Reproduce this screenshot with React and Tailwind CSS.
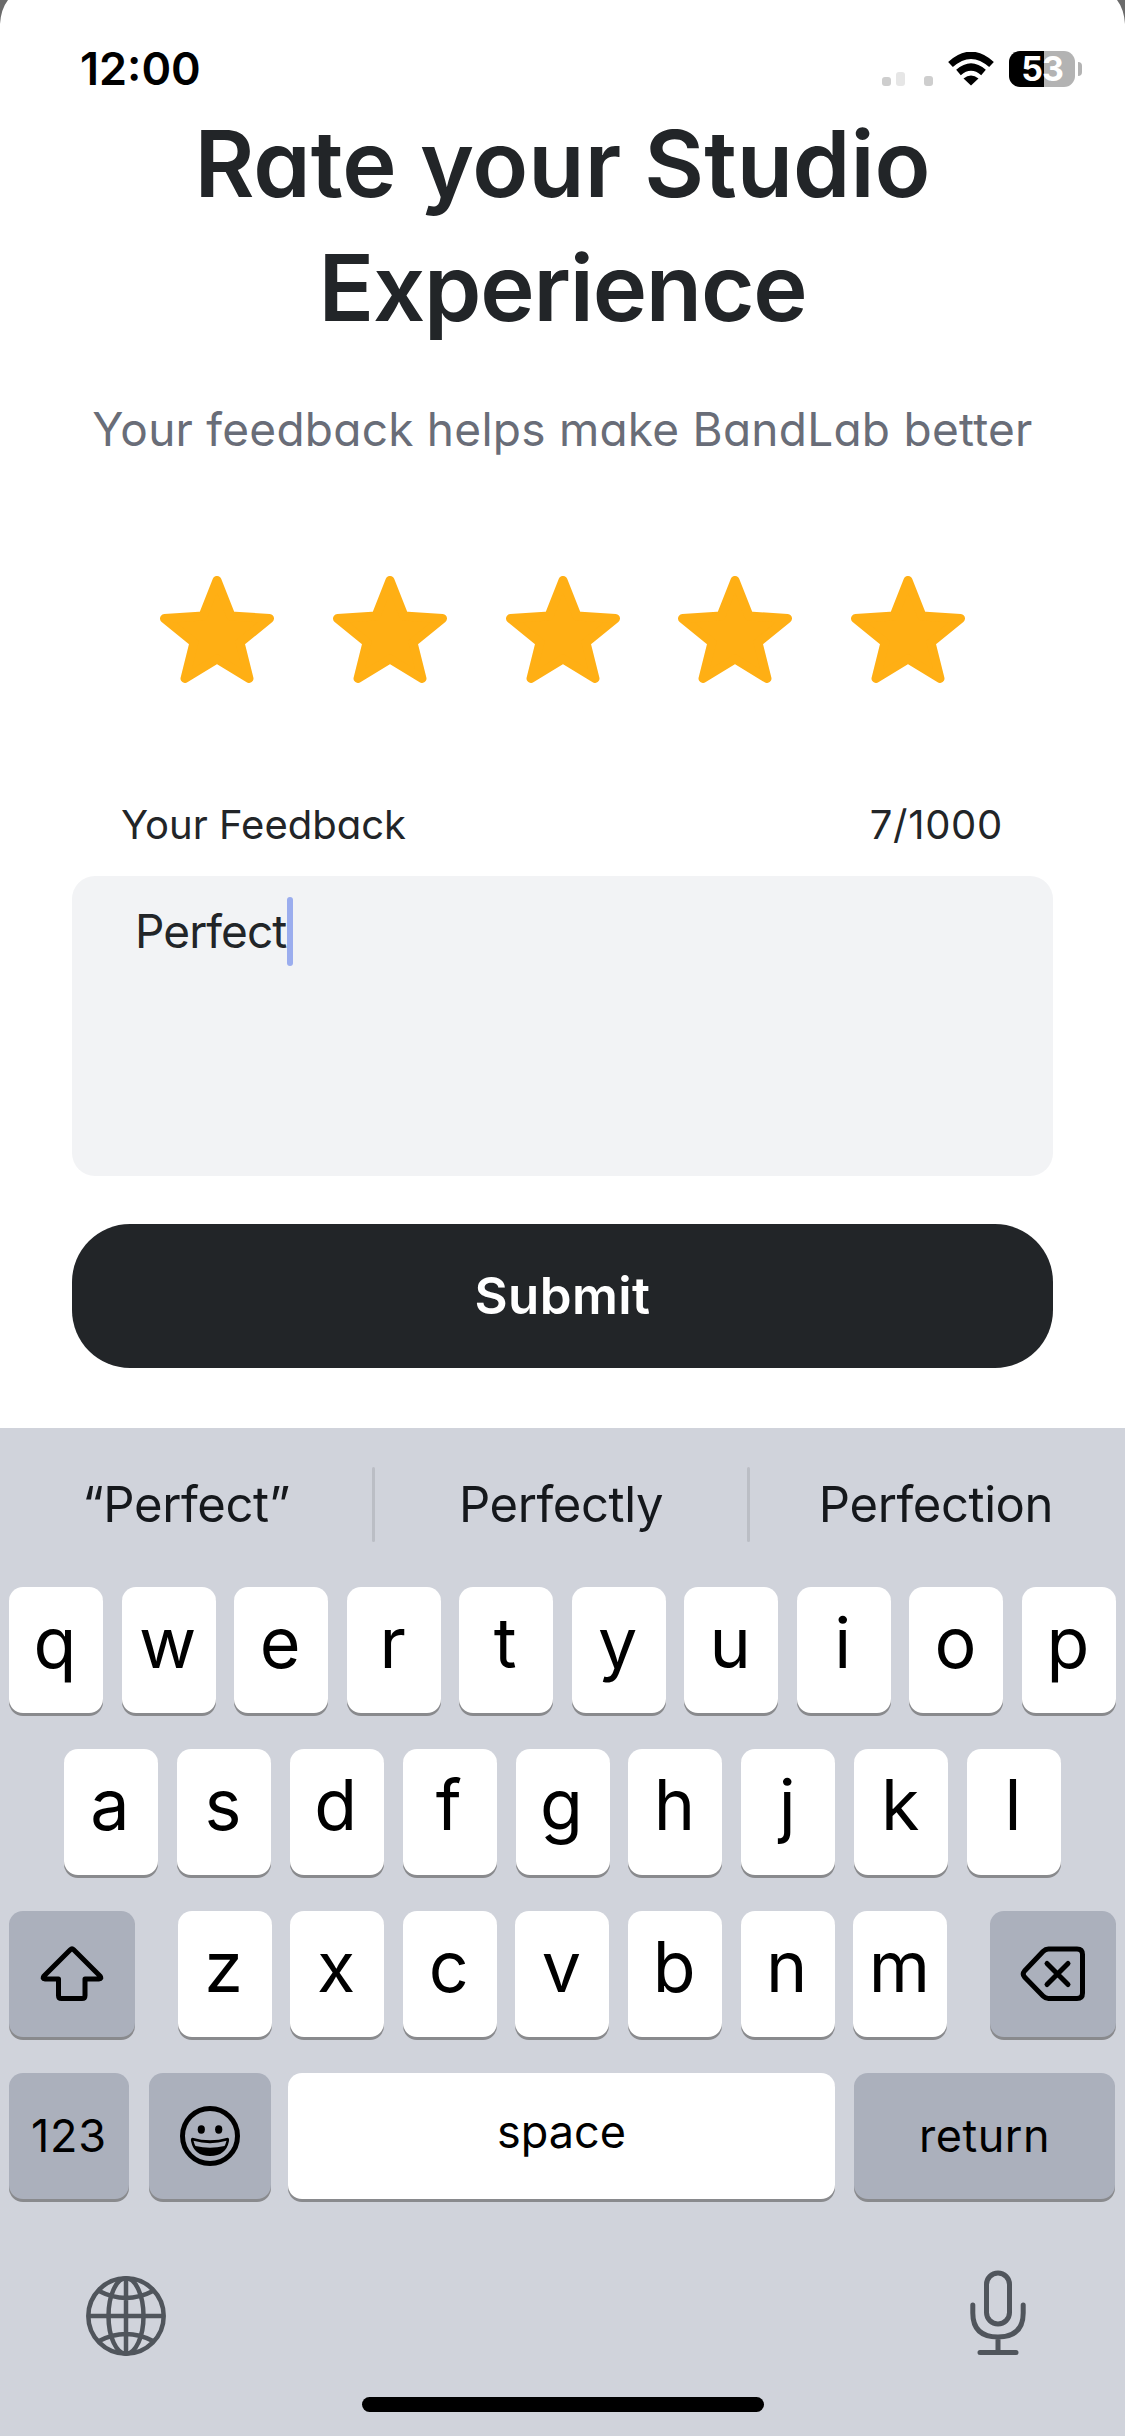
import React from "react";

const suggestions = ["“Perfect”", "Perfectly", "Perfection"];
const topRow = ["q", "w", "e", "r", "t", "y", "u", "i", "o", "p"];
const middleRow = ["a", "s", "d", "f", "g", "h", "j", "k", "l"];
const bottomRow = ["z", "x", "c", "v", "b", "n", "m"];

const StarIcon = () => (
  <svg viewBox="0 0 114 107" className="h-[107px] w-[114px]" fill="#ffaf14" stroke="#ffaf14" strokeWidth="9" strokeLinejoin="round">
    <path d="M57 4.500L71 40L109.500 42.500L80 66.500L89 102.500L57 83L25 102.500L34 66.500L4.500 42.500L43 40Z" />
  </svg>
);

const ShiftIcon = () => (
  <svg viewBox="0 0 64 56" className="h-14 w-16" fill="none" stroke="#000" strokeWidth="5" strokeLinejoin="round">
    <path d="M30.300 3.700Q32 2 33.700 3.700L60 30Q62 33 59 33H45V49.500Q45 52.500 42 52.500H21.500Q18.500 52.500 18.500 49.500V33H5Q2 33 4 30Z" />
  </svg>
);

const DeleteIcon = () => (
  <svg viewBox="0 0 66 56" className="h-14 w-[66px]" fill="none" stroke="#000" strokeWidth="5" strokeLinecap="round" strokeLinejoin="round">
    <path d="M28.500 3H57Q62.500 3 62.500 8.500V47Q62.500 52.500 57 52.500H28.500Q25.500 52.500 23 50L4.500 31Q2 28 4.500 25L23 5.500Q25.500 3 28.500 3Z" />
    <path d="M27 17.500L48 38.500M48 17.500L27 38.500" />
  </svg>
);

const SmileIcon = () => (
  <svg viewBox="0 0 60 60" className="h-[60px] w-[60px]">
    <circle cx="30" cy="30" r="27.500" fill="none" stroke="#000" strokeWidth="5" />
    <ellipse cx="21.300" cy="23.500" rx="3.600" ry="4.200" />
    <ellipse cx="38.700" cy="23.500" rx="3.600" ry="4.200" />
    <path d="M12.500 31.700Q30 37 47.500 31.700Q49.500 32 49 35Q46 50 30 50Q14 50 11 35Q10.500 32 12.500 31.700Z" />
    <path d="M13.500 34.800Q30 39.500 46.500 34.800Q45.800 38 44.500 40Q30 43.500 15.500 40Q14.200 38 13.500 34.800Z" fill="#abb0bc" />
  </svg>
);

const GlobeIcon = () => (
  <svg viewBox="0 0 80 80" className="h-20 w-20" fill="none" stroke="#50555c" strokeWidth="4.500">
    <circle cx="40" cy="40" r="37.700" />
    <ellipse cx="40" cy="40" rx="17.500" ry="37.700" />
    <path d="M40 2V78M2 40H78M13 15Q40 29 67 15M13 65Q40 51 67 65" />
  </svg>
);

const MicIcon = () => (
  <svg viewBox="0 0 56 86" className="h-[86px] w-14" fill="none" stroke="#50555c" strokeWidth="5" strokeLinecap="round">
    <rect x="16.500" y="3" width="23" height="51" rx="11.500" />
    <path d="M2.800 35V43Q2.800 67 28 67Q53.200 67 53.200 43V35M28 67V82M10 82.500H46" />
  </svg>
);

const StatusBar = () => (
  <div className="flex h-[120px] items-start justify-between pt-[51px] pr-[43px] pl-[80px]">
    <span className="text-[45px] leading-9 font-semibold">12:00</span>
    <div className="flex items-center">
      <div className="mr-[15px] flex h-9 items-end pb-px">
        <span className="h-[9px] w-[9px] rounded-[3px] bg-[#cecece]" />
        <span className="ml-[5px] h-3.5 w-[9px] rounded-[3px] bg-[#e6e6e6]" />
        <span className="ml-[19px] h-2.5 w-[9px] rounded-[3px] bg-[#cecece]" />
      </div>
      <svg viewBox="0 0 46 34" className="mr-[15px] h-[34px] w-[46px]" fill="none" stroke="#000" strokeWidth="7">
        <path d="M2.500 12.500Q23 -6 43.500 12.500M10.500 20.500Q23 9.500 35.500 20.500" />
        <path d="M15.500 26.500Q23 20.500 30.500 26.500L23 33.500Z" fill="#000" stroke="none" />
      </svg>
      <div className="flex h-9 w-[66px] items-center justify-center rounded-[11px] bg-[linear-gradient(to_right,#000_53%,#b3b3b3_53%)]">
        <span className="text-[34px] leading-9 font-bold tracking-[-1px] text-white">53</span>
      </div>
      <span className="ml-[3px] h-3.5 w-1 rounded-r-full bg-[#b3b3b3]" />
    </div>
  </div>
);

const LetterKey = ({ label }) => (
  <button className="h-[126px] w-[94px] rounded-[14px] bg-white pr-0.5 pb-[14px] text-[70px] leading-[112px] font-normal shadow-[0_3px_0_#898a8d]">
    {label}
  </button>
);

const Keyboard = () => (
  <div className="h-[1008px] bg-[#d0d3db]">
    <div className="flex h-[159px] items-start pt-[39px] pr-[3px]">
      {suggestions.map((word, i) => (
        <React.Fragment key={word}>
          {i > 0 && <span className="h-[75px] w-[3px] rounded-full bg-[#bbbec5]" />}
          <span className="flex-1 text-center text-[49px] leading-[76px] tracking-[-0.4px] text-[#15181c]">{word}</span>
        </React.Fragment>
      ))}
    </div>
    <div className="flex flex-col gap-9 px-[9px]">
      <div className="flex justify-between">
        {topRow.map((k) => <LetterKey key={k} label={k} />)}
      </div>
      <div className="flex justify-between px-[55px]">
        {middleRow.map((k) => <LetterKey key={k} label={k} />)}
      </div>
      <div className="flex justify-between">
        <button className="flex h-[126px] w-[126px] items-center justify-center rounded-[14px] bg-[#abb0bc] shadow-[0_3px_0_#898a8d]">
          <ShiftIcon />
        </button>
        <div className="flex w-[770px] justify-between">
          {bottomRow.map((k) => <LetterKey key={k} label={k} />)}
        </div>
        <button className="flex h-[126px] w-[126px] items-center justify-center rounded-[14px] bg-[#abb0bc] shadow-[0_3px_0_#898a8d]">
          <DeleteIcon />
        </button>
      </div>
      <div className="flex text-[45px]">
        <button className="h-[126px] w-[120px] rounded-[14px] bg-[#abb0bc] tracking-[0.8px] shadow-[0_3px_0_#898a8d]">123</button>
        <button className="ml-5 flex h-[126px] w-[122px] items-center justify-center rounded-[14px] bg-[#abb0bc] shadow-[0_3px_0_#898a8d]">
          <SmileIcon />
        </button>
        <button className="ml-[17px] h-[126px] w-[547px] rounded-[14px] bg-white pb-2 shadow-[0_3px_0_#898a8d]">space</button>
        <button className="ml-[19px] h-[126px] w-[261px] rounded-[14px] bg-[#abb0bc] tracking-[0.5px] shadow-[0_3px_0_#898a8d]">return</button>
      </div>
    </div>
    <div className="flex justify-between pt-[71px] pr-[99px] pl-[86px]">
      <div className="pt-[6px]">
        <GlobeIcon />
      </div>
      <MicIcon />
    </div>
    <div className="mx-auto mt-[41px] h-[15px] w-[402px] rounded-full bg-black" />
  </div>
);

export default function App() {
  return (
    <div className="relative h-[2436px] w-[1125px] overflow-hidden bg-white font-[Inter,sans-serif] text-black">
      <svg viewBox="0 0 1125 30" className="absolute top-0 left-0 h-[30px] w-[1125px]" fill="#6b6b6b">
        <path d="M0 0H8Q1 9 0 24ZM1125 0H1117Q1124 9 1125 24Z" />
      </svg>
      <StatusBar />
      <div className="flex h-[1308px] flex-col px-[72px] text-[#222528] [font-feature-settings:'cv11']">
        <h1 className="-mt-[18px] h-[248px] text-center text-[92px] leading-[124px] font-semibold whitespace-nowrap">
          Rate your Studio
          <br />
          <span className="tracking-[-1.2px]">Experience</span>
        </h1>
        <p className="mt-[44px] text-center text-[46px] leading-[70px] tracking-[0.25px] whitespace-nowrap text-[#696d78]">
          Your feedback helps make BandLab better
        </p>
        <div className="mt-[112px] flex justify-between px-[88px]">
          {[1, 2, 3, 4, 5].map((n) => <StarIcon key={n} />)}
        </div>
        <div className="mt-[112px] flex justify-between pr-[50px] pl-[49px] text-[40px] leading-[60px]">
          <span>Your Feedback</span>
          <span className="tracking-[0.7px]">7/1000</span>
        </div>
        <div className="mt-[21px] flex h-[300px] items-start rounded-[23px] bg-[#f2f3f5] pt-[21px] pl-[63px]">
          <span className="text-[46px] leading-[69px] tracking-[-0.9px]">Perfect</span>
          <span className="h-[69px] w-[6px] rounded-full bg-[#9badee]" />
        </div>
        <button className="mt-12 h-[144px] rounded-[58px] bg-[#222528] text-[51px] font-semibold tracking-[0.4px] text-white">Submit</button>
      </div>
      <Keyboard />
    </div>
  );
}
